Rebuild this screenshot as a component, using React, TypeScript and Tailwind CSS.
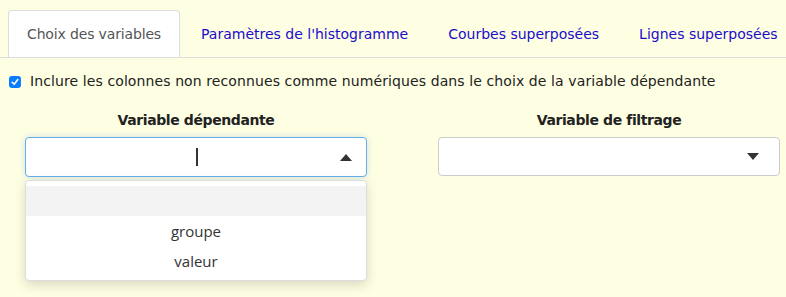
import React from 'react';

const font = { fontFamily: '"DejaVu Sans", Verdana, sans-serif' };

function Caret({ up }: { up?: boolean }) {
  return (
    <svg width="12" height="7" viewBox="0 0 12 7" className="fill-[#333]">
      {up ? <path d="M0 7 L6 0 L12 7 Z" /> : <path d="M0 0 L6 7 L12 0 Z" />}
    </svg>
  );
}

export default function App() {
  const tabs = ['Choix des variables', "Paramètres de l'histogramme", 'Courbes superposées', 'Lignes superposées'];
  return (
    <div className="w-[786px] h-[297px] bg-[#fefee2] overflow-hidden text-[14px] text-[#222]" style={font}>
      {/* tabs */}
      <div className="flex pl-[8px] pt-[10px] border-b border-[#ddd] h-[58px] overflow-hidden">
        {tabs.map((t, i) => (
          <div
            key={t}
            className={
              i === 0
                ? 'shrink-0 whitespace-nowrap h-[48px] px-[18px] mr-[2px] flex items-center bg-white border border-[#ddd] border-b-white rounded-t-[4px] text-[#555] tracking-[-0.15px]'
                : 'shrink-0 whitespace-nowrap h-[48px] px-[19px] mr-[2px] flex items-center text-[#1a0dcc]'
            }
          >
            {t}
          </div>
        ))}
      </div>

      <label className="flex items-center gap-[9px] pl-[9px] mt-[13px]">
        <span className="w-[12px] h-[12px] rounded-[3px] bg-[#0a7cff] flex items-center justify-center">
          <svg width="8" height="8" viewBox="0 0 8 8" fill="none" stroke="white" strokeWidth="1.6" strokeLinecap="round" strokeLinejoin="round">
            <path d="M1.2 4.3 L3.2 6.2 L6.8 1.6" />
          </svg>
        </span>
        <span className="tracking-[0.1px]">Inclure les colonnes non reconnues comme numériques dans le choix de la variable dépendante</span>
      </label>

      <div className="flex mt-[18px]">
        <div className="w-[342px] ml-[25px] relative">
          <div className="text-center font-bold h-[20px] leading-[20px] tracking-[-0.4px]">Variable dépendante</div>
          <div className="mt-[7px] h-[40px] bg-white border border-[#66afe9] rounded-[4px] flex items-center justify-end pr-[14px] relative shadow-[0_0_6px_rgba(102,175,233,0.35)]">
            <span className="absolute left-[170px] top-[10px] w-[2px] h-[18px] bg-[#333]" />
            <Caret up />
          </div>
          <div className="absolute left-0 top-[70px] w-[342px] h-[101px] bg-white border border-[#ddd] rounded-[4px] shadow-[0_4px_12px_rgba(0,0,0,0.15)] pt-[5px] text-[#333]" style={{ fontFamily: '"Open Sans", sans-serif', fontSize: 15 }}>
            <div className="h-[30px] bg-[#f3f3f3]" />
            <div className="h-[30px] leading-[30px] text-center">groupe</div>
            <div className="h-[30px] leading-[30px] text-center">valeur</div>
          </div>
        </div>
        <div className="w-[342px] ml-[71px]">
          <div className="text-center font-bold h-[20px] leading-[20px] tracking-[-0.4px]">Variable de filtrage</div>
          <div className="mt-[7px] h-[39px] bg-white border border-[#ccc] rounded-[4px] flex items-center justify-end pr-[20px]">
            <Caret />
          </div>
        </div>
      </div>
    </div>
  );
}
